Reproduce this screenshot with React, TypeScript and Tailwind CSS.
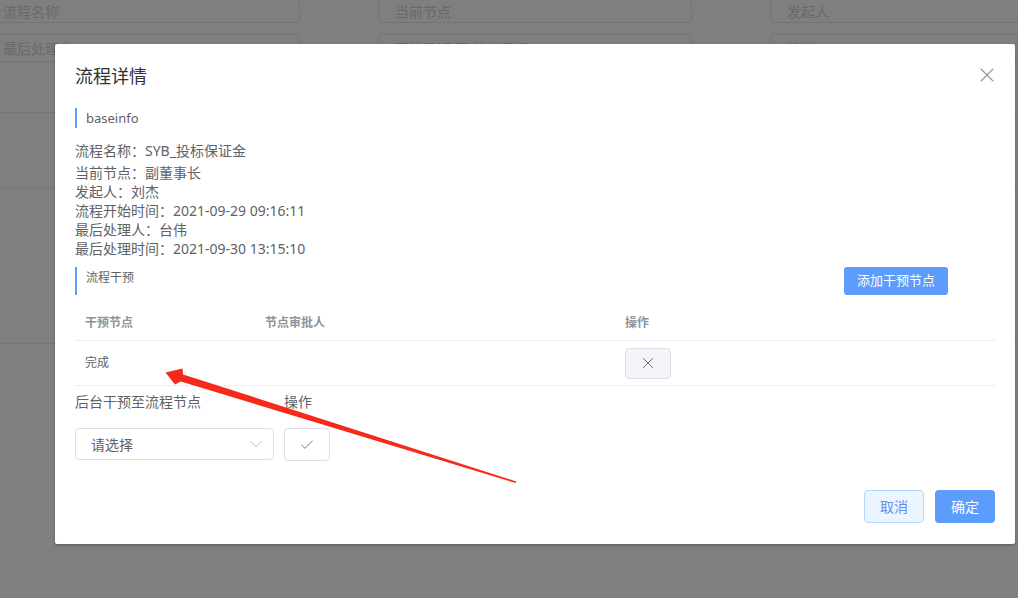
import { X, ChevronDown, Check } from "lucide-react";

const infoRows = [
  "当前节点：副董事长",
  "发起人：刘杰",
  "流程开始时间：2021-09-29 09:16:11",
  "最后处理人：台伟",
  "最后处理时间：2021-09-30 13:15:10",
];

function SearchInput({ placeholder, tall }: { placeholder: string; tall?: boolean }) {
  return (
    <div
      className={
        (tall ? "h-[28px]" : "h-[24px]") +
        " border border-[#e8e8e8] rounded-[4px] pl-[16px] flex items-center text-[14px] text-[#d2d2d2]"
      }
    >
      {placeholder}
    </div>
  );
}

export default function App() {
  return (
    <div className="relative w-[1018px] h-[598px] overflow-hidden bg-white font-['Noto_Sans','Noto_Sans_CJK_SC',sans-serif]">
      {/* page behind the dialog */}
      <div className="-mt-[1px] -ml-[14px] grid grid-cols-[314px_314px_314px] gap-x-[78px] gap-y-[11px]">
        <SearchInput placeholder="流程名称" />
        <SearchInput placeholder="当前节点" />
        <SearchInput placeholder="发起人" />
        <SearchInput placeholder="最后处理人" tall />
        <SearchInput placeholder="开始日期 至 结束日期" tall />
        <SearchInput placeholder="状态" tall />
      </div>
      <div className="h-[51px] border-b border-[#eeeeee]" />
      <div className="h-[76px] border-b border-[#eeeeee]" />
      <div className="h-[155px] border-b border-[#eeeeee]" />

      {/* mask */}
      <div className="absolute inset-0 bg-black/50" />

      {/* dialog */}
      <div className="absolute left-[55px] top-[44px] w-[960px] h-[500px] bg-white rounded-[2px] shadow-[0_1px_3px_rgba(0,0,0,0.3)] px-[20px] flex flex-col">
        <div className="pt-[20px] flex items-center justify-between">
          <span className="text-[18px] leading-[24px] text-[#303133]">流程详情</span>
          <X size={24} strokeWidth={1.1} className="-mr-[4px] -mt-[2px] text-[#909399]" />
        </div>

        <div className="mt-[20px] h-[20px] border-l-2 border-[#5b9cfc] pl-[9px] text-[13px] leading-[20px] text-[#606266]">
          baseinfo
        </div>

        <div className="mt-[13px] text-[14px] leading-[19px] text-[#606266]">
          <p className="mb-[3px]">流程名称：SYB_投标保证金</p>
          {infoRows.map((r) => (
            <p key={r}>{r}</p>
          ))}
        </div>

        <div className="mt-[9px] h-[28px] flex justify-between">
          <div className="border-l-2 border-[#5b9cfc] pl-[9px] text-[12px] leading-[22px] text-[#606266]">
            流程干预
          </div>
          <button className="mr-[47px] w-[104px] h-[28px] rounded-[3px] bg-[#5b9cfc] text-white text-[13px]">
            添加干预节点
          </button>
        </div>

        {/* intervention table */}
        <div className="h-[46px] border-b border-[#ebeef5] flex items-end pb-[8px] text-[12px] leading-[18px] font-bold text-[#909399]">
          <div className="w-[180px] pl-[10px]">干预节点</div>
          <div className="w-[360px] pl-[10px]">节点审批人</div>
          <div className="flex-1 pl-[10px]">操作</div>
        </div>
        <div className="h-[45px] border-b border-[#ebeef5] flex items-center text-[12px] text-[#606266]">
          <div className="w-[180px] pl-[10px]">完成</div>
          <div className="w-[360px] pl-[10px]" />
          <div className="flex-1 pl-[10px]">
            <button className="w-[46px] h-[31px] border border-[#dcdfe6] bg-[#f4f5f8] rounded-[4px] flex items-center justify-center">
              <X size={18} strokeWidth={1.2} className="text-[#606266]" />
            </button>
          </div>
        </div>

        <div className="mt-[6px] grid grid-cols-[209px_1fr] text-[14px] leading-[20px] text-[#606266]">
          <span>后台干预至流程节点</span>
          <span>操作</span>
        </div>

        <div className="mt-[16px] flex">
          <div className="w-[199px] h-[32px] border border-[#dcdfe6] rounded-[4px] pl-[15px] pr-[6px] flex items-center justify-between text-[14px] text-[#606266]">
            <span>请选择</span>
            <ChevronDown size={22} strokeWidth={1.1} className="text-[#c0c4cc]" />
          </div>
          <button className="ml-[10px] w-[46px] h-[33px] border border-[#dcdfe6] rounded-[4px] bg-white flex items-center justify-center">
            <Check size={16} strokeWidth={1.3} className="text-[#606266]" />
          </button>
        </div>

        <div className="mt-auto pb-[21px] flex justify-end gap-[11px] text-[14px]">
          <button className="w-[60px] h-[33px] rounded-[4px] border border-[#b3d8ff] bg-[#ecf5ff] text-[#5a8ef5]">
            取消
          </button>
          <button className="w-[60px] h-[33px] rounded-[4px] bg-[#5b9cfc] text-white">
            确定
          </button>
        </div>
      </div>

      {/* red annotation arrow */}
      <svg className="absolute inset-0 pointer-events-none" width="1018" height="598">
        <polygon
          fill="#f52a1a"
          points="516.3,481.5 183.1,374.4 182.5,368.5 165.5,372.5 175,384.5 180.9,381.6 515.7,483"
        />
      </svg>
    </div>
  );
}
